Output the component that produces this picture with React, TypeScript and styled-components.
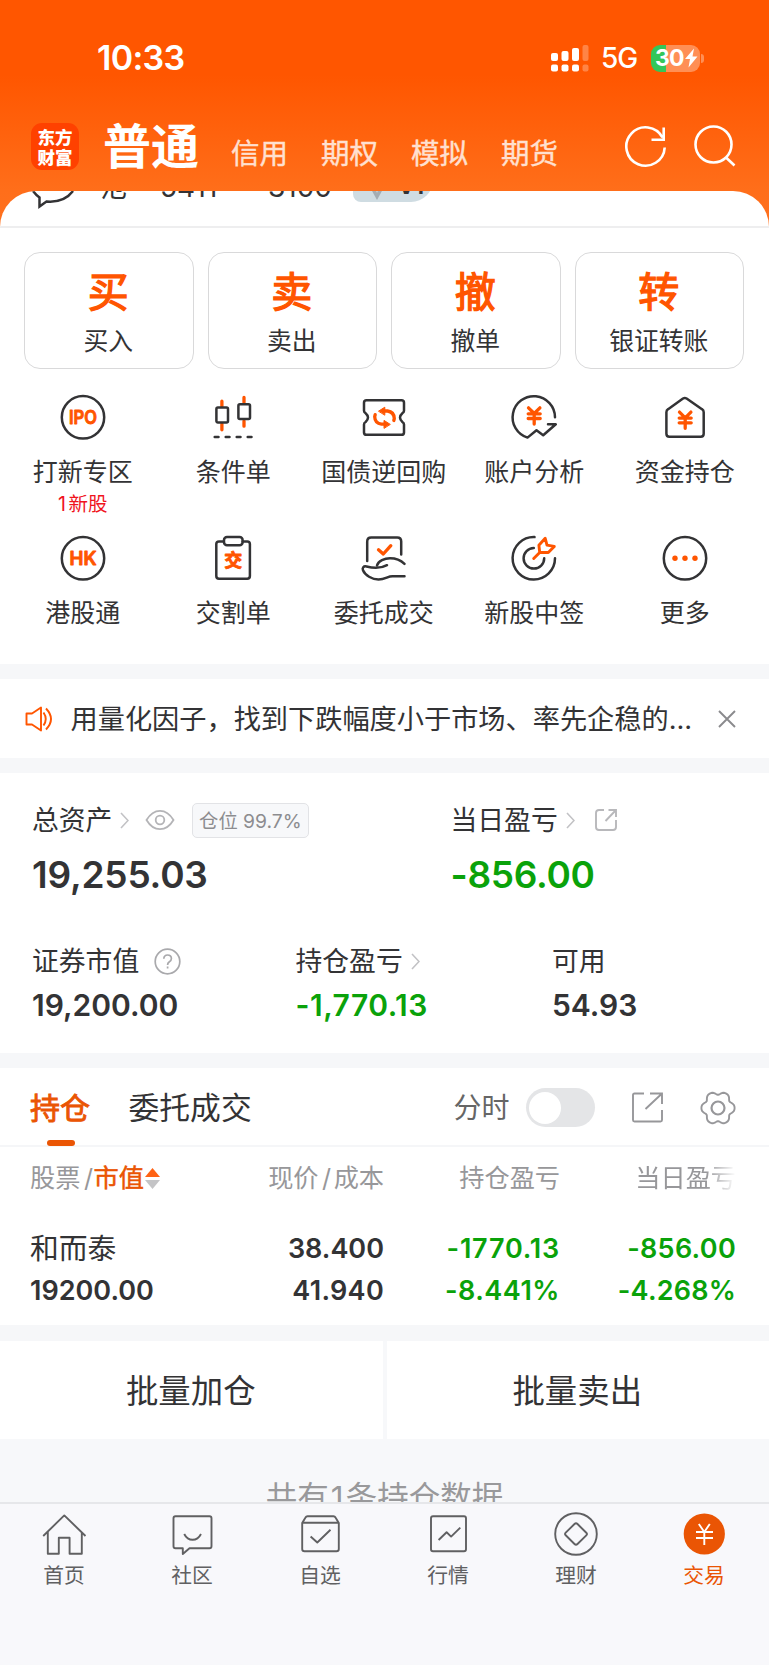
import React from "react";
import styled, { createGlobalStyle } from "styled-components";

const ORANGE = "#ff5500";
const TAB_ORANGE = "#ea5504";
const INK = "#333335";
const GREEN = "#0aa20a";

const Global = createGlobalStyle`
  * { box-sizing: border-box; }
  body {
    margin: 0;
    background: #f7f8fa;
    font-family: Inter, "Noto Sans CJK SC", sans-serif;
    color: ${INK};
    line-height: 1;
  }
  svg { display: block; flex: none; fill: none; }
`;

const Screen = styled.div`
  width: 769px;
  height: 1665px;
  display: flex;
  flex-direction: column;
  overflow: hidden;
  background: linear-gradient(#ff5600 0, #ff5600 75px, #ff6e1a 190px, #ff7220 240px, #f7f8fa 241px);
`;

/* ---------- status bar ---------- */
const StatusBar = styled.div`
  height: 115px;
  flex: none;
  display: flex;
  align-items: center;
  padding: 1px 65px 0 97px;
  color: #fff;
`;
const Clock = styled.div`
  font-size: 34px;
  font-weight: 600;
  letter-spacing: -0.7px;
  flex: 1;
`;
const Network = styled.div`
  font-size: 28px;
  font-weight: 500;
  width: 59px;
  padding-left: 12px;
  letter-spacing: -1px;
`;
const Battery = styled.div`
  width: 49px;
  height: 27px;
  margin-left: 3px;
  border-radius: 9px;
  background: linear-gradient(90deg, #34c759 15px, #ff8f55 15px);
  display: flex;
  align-items: center;
  padding-left: 4px;
  font-size: 23px;
  font-weight: 700;
  letter-spacing: -0.8px;
`;
const BatteryTip = styled.div`
  width: 3px;
  height: 9px;
  margin-left: 1px;
  border-radius: 0 4px 4px 0;
  background: #ff8f55;
`;

/* ---------- header ---------- */
const Header = styled.div`
  height: 76px;
  flex: none;
  display: flex;
  align-items: flex-start;
  padding: 0 33px 0 31px;
  color: #fff;
`;
const Logo = styled.div`
  width: 48px;
  height: 47px;
  margin-top: 8px;
  border-radius: 11px;
  background: #ff4100;
  display: grid;
  place-content: center;
  font: 900 17.5px/20px "Noto Sans CJK SC", sans-serif;
  text-align: center;
`;
const MainTab = styled.div`
  margin: 4px 0 0 24px;
  width: 103px;
  font-size: 48px;
  line-height: 56px;
  font-weight: 700;
  white-space: nowrap;
`;
const SubTab = styled.div`
  margin: 24px 0 0;
  width: 90px;
  padding-left: 25px;
  font-size: 28.5px;
  line-height: 30px;
  -webkit-text-stroke: 0.4px #ffe0d0;
  color: #ffe0d0;
  white-space: nowrap;
`;
const HeaderIcons = styled.div`
  flex: 1;
  display: flex;
  justify-content: flex-end;
  gap: 25px;
  margin-top: 8px;
`;

/* ---------- sheet ---------- */
const Sheet = styled.div`
  flex: none;
  height: 473px;
  background: #fff;
  border-radius: 36px 36px 0 0;
  overflow: hidden;
`;
const AccountRow = styled.div`
  height: 37px;
  border-bottom: 2px solid #eeeeef;
  display: flex;
  align-items: flex-start;
  padding-left: 32px;
  overflow: hidden;
  font-size: 28px;
`;
const AccountText = styled.span<{ $w: number }>`
  width: ${(p) => p.$w}px;
  margin-top: -18px;
  line-height: 28px;
  white-space: nowrap;
  flex: none;
`;
const LevelPill = styled.span`
  width: 80px;
  height: 30px;
  margin-top: -19px;
  border-radius: 8px 8px 22px 8px;
  background: #cfdce2;
  display: flex;
  align-items: flex-start;
  gap: 9px;
  padding: 3px 0 0 12px;
  font-size: 22px;
  font-weight: 700;
  line-height: 22px;
`;
const Gem = styled.svg`
  margin-top: 4px;
`;
const Cards = styled.div`
  display: grid;
  grid-template-columns: repeat(4, 169.5px);
  gap: 14px;
  padding: 24px 0 0 24px;
`;
const Card = styled.div`
  height: 117px;
  border: 1.5px solid #d9d9da;
  border-radius: 16px;
  display: flex;
  flex-direction: column;
  align-items: center;
  padding: 18px 1px 0 0;
`;
const CardGlyph = styled.div`
  font-size: 41px;
  line-height: 42px;
  -webkit-text-stroke: 1.3px ${ORANGE};
  color: ${ORANGE};
`;
const CardLabel = styled.div`
  margin-top: 15px;
  font-size: 24.8px;
  line-height: 26px;
`;
const Shortcuts = styled.div`
  display: grid;
  grid-template-columns: repeat(5, 150.5px);
  grid-auto-rows: 141px;
  padding: 24px 0 0 7.5px;
`;
const Shortcut = styled.div`
  display: flex;
  flex-direction: column;
  align-items: center;
`;
const ShortcutLabel = styled.div`
  margin-top: 18px;
  font-size: 25px;
  line-height: 26px;
  white-space: nowrap;
`;
const ShortcutNote = styled.div`
  margin-top: 9px;
  font-size: 19.5px;
  line-height: 20px;
  color: #f0141e;
  &::first-letter { letter-spacing: 2.5px; }
`;

/* ---------- notice ---------- */
const Gap = styled.div<{ $h: number }>`
  flex: none;
  height: ${(p) => p.$h}px;
  background: #f6f7f9;
`;
const Notice = styled.div`
  flex: none;
  height: 79px;
  background: #fff;
  display: flex;
  align-items: center;
  padding: 0 33px 0 25px;
`;
const NoticeText = styled.div`
  flex: 1;
  padding: 2px 0 0 16.5px;
  font-size: 27.2px;
  white-space: nowrap;
`;

/* ---------- assets ---------- */
const Assets = styled.div`
  flex: none;
  height: 280px;
  background: #fff;
  padding: 29px 0 0 32px;
`;
const AssetRow = styled.div<{ $cols: string; $top?: number }>`
  display: grid;
  grid-template-columns: ${(p) => p.$cols};
  margin-top: ${(p) => p.$top ?? 0}px;
`;
const AssetLabel = styled.div`
  height: 36px;
  display: flex;
  align-items: center;
  font-size: 26.8px;
  white-space: nowrap;
`;
const Inset = styled.span<{ $l: number }>`
  margin-left: ${(p) => p.$l}px;
`;
const Badge = styled.span`
  width: 117px;
  height: 35px;
  margin-left: 16.5px;
  padding-top: 3px;
  border: 1.5px solid #e2e3e6;
  border-radius: 5px;
  background: #f7f8fa;
  display: flex;
  align-items: center;
  justify-content: center;
  font-size: 19.3px;
  color: #8c8c8f;
`;
const Amount = styled.div<{ $size: number; $top: number; $green?: boolean; $ls?: number }>`
  margin-top: ${(p) => p.$top}px;
  font-size: ${(p) => p.$size}px;
  font-weight: 600;
  letter-spacing: ${(p) => p.$ls ?? 0}px;
  color: ${(p) => (p.$green ? GREEN : INK)};
`;

/* ---------- positions ---------- */
const Positions = styled.div`
  flex: none;
  height: 257px;
  background: #fff;
`;
const Tabs = styled.div`
  height: 79px;
  border-bottom: 2px solid #f5f6f8;
  display: flex;
  align-items: flex-start;
  padding-left: 30px;
`;
const Tab = styled.div<{ $active?: boolean }>`
  height: 78px;
  width: ${(p) => (p.$active ? 98.5 : 325)}px;
  font-size: ${(p) => (p.$active ? 30 : 30.8)}px;
  -webkit-text-stroke: ${(p) => (p.$active ? `0.9px ${TAB_ORANGE}` : "0")};
  color: ${(p) => (p.$active ? TAB_ORANGE : INK)};
  line-height: 32px;
  padding-top: 24px;
  display: flex;
  flex-direction: column;
  white-space: nowrap;
`;
const Underline = styled.div`
  width: 28px;
  height: 6px;
  border-radius: 3px;
  margin: 16px 0 0 17px;
  background: ${TAB_ORANGE};
`;
const Tools = styled.div`
  height: 79px;
  display: flex;
  align-items: center;
  font-size: 28px;
  color: #666;
`;
const Toggle = styled.div`
  width: 69px;
  height: 39px;
  margin-left: 16.5px;
  border-radius: 20px;
  background: #e4e5e7;
  padding: 3.5px 2.5px;
  &::before {
    content: "";
    display: block;
    width: 32px;
    height: 32px;
    border-radius: 50%;
    background: #fff;
  }
`;
const TableRow = styled.div<{ $h: number; $head?: boolean }>`
  height: ${(p) => p.$h}px;
  display: grid;
  grid-template-columns: 170px 184px 176px 176px;
  align-items: center;
  padding-left: 30px;
  font-size: ${(p) => (p.$head ? 25.2 : 27)}px;
  font-weight: ${(p) => (p.$head ? 400 : 600)};
  color: ${(p) => (p.$head ? "#97979a" : INK)};
  white-space: nowrap;
`;
const Cell = styled.div<{ $green?: boolean; $name?: boolean; $fade?: boolean; $ls?: number }>`
  text-align: right;
  color: ${(p) => (p.$green ? GREEN : "inherit")};
  letter-spacing: ${(p) => p.$ls ?? 0}px;
  ${(p) => p.$fade && "mask-image: linear-gradient(90deg, #000 calc(100% - 30px), transparent);"}
  &:first-child {
    display: flex;
    align-items: center;
    ${(p) => p.$name && "font-size: 28.8px; font-weight: 400; padding-top: 1px;"}
  }
`;
const Slash = styled.span`
  padding: 0 2.5px 0 3.5px;
`;
const SortKey = styled.span`
  color: ${TAB_ORANGE};
  -webkit-text-stroke: 0.5px ${TAB_ORANGE};
  margin: 0 1px 0 -2px;
`;

const BatchRow = styled.div`
  flex: none;
  display: grid;
  grid-template-columns: 1fr 1fr;
  gap: 4px;
  height: 98px;
  background: #f7f8fa;
`;
const BatchButton = styled.div`
  background: #fff;
  display: flex;
  align-items: center;
  justify-content: center;
  padding: 5px 1px 0 0;
  font-size: 32.4px;
`;
const Summary = styled.div`
  flex: none;
  height: 63px;
  overflow: hidden;
  background: #f7f8fa;
  text-align: center;
  padding-top: 42px;
  font-size: 31.5px;
  line-height: 34px;
  color: #99999b;
`;
const Count = styled.span`
  padding: 0 2px;
`;

/* ---------- bottom navigation ---------- */
const Nav = styled.div`
  flex: 1;
  border-top: 2px solid #e6e7ea;
  background: #f8f8fb;
  display: grid;
  grid-template-columns: repeat(6, 128px);
  padding-top: 6px;
`;
const NavItem = styled.div<{ $active?: boolean }>`
  display: flex;
  flex-direction: column;
  align-items: center;
  gap: 6.5px;
  font-size: 20.8px;
  line-height: 22px;
  color: ${(p) => (p.$active ? TAB_ORANGE : "#606062")};
`;

/* ---------- drawings ---------- */
const Dark = styled.g`
  stroke: ${INK};
  stroke-width: 2.5;
  stroke-linecap: round;
  stroke-linejoin: round;
`;
const Hot = styled.g<{ $w?: number }>`
  stroke: ${ORANGE};
  stroke-width: ${(p) => p.$w ?? 3.3};
  stroke-linecap: round;
  stroke-linejoin: round;
`;
const IconText = styled.text`
  fill: ${ORANGE};
  stroke: ${ORANGE};
  stroke-width: 0.9;
  stroke-linejoin: round;
  font-family: Inter, "Noto Sans CJK SC", sans-serif;
  font-weight: 600;
  text-anchor: middle;
`;

const Box48 = ({ children }: { children: React.ReactNode }) => (
  <svg width="48" height="48" viewBox="0 0 48 48">{children}</svg>
);

const Yen = ({ y = 0 }: { y?: number }) => (
  <Hot transform={`translate(0 ${y})`}>
    <path d="M18.5 14.8l5.7 5.7 5.7-5.7M24.2 20.5v10.500M18.200 20.800h12M18.200 25.500h12" />
  </Hot>
);

const Chevron = () => (
  <svg width="9" height="17" viewBox="0 0 9 17">
    <path d="M1 1l7 7.5L1 16" stroke="#c2c2c5" strokeWidth="1.6" />
  </svg>
);

/* six-lobed outline of the settings gear */
const gearPath =
  Array.from({ length: 72 }, (_, i) => {
    const a = (i * Math.PI) / 36;
    const r = 15.2 + 1.7 * Math.cos(6 * a) - 0.3 * Math.cos(12 * a);
    return `${i ? "L" : "M"}${(18 + r * Math.cos(a)).toFixed(2)} ${(18 + r * Math.sin(a)).toFixed(2)}`;
  }).join("") + "z";

const shortcuts = [
  {
    label: "打新专区",
    note: "1新股",
    icon: (
      <>
        <Dark><circle cx="24" cy="24.3" r="21.2" /></Dark>
        <IconText x="24" y="31" fontSize="18.5" textLength="28" lengthAdjust="spacingAndGlyphs">IPO</IconText>
      </>
    ),
  },
  {
    label: "条件单",
    icon: (
      <>
        <Hot><path d="M12.9 8.2v5M12.9 31v5.8M35 4.5v5M35 28v5.2" /></Hot>
        <Dark>
          <rect x="7.4" y="14.6" width="11.6" height="14.9" rx="1.5" />
          <rect x="29.4" y="11.2" width="11.6" height="14.9" rx="1.5" />
          <path d="M5.7 44h3.800M16.700 44h3.800M27.700 44h3.800M38.700 44h3.800" />
        </Dark>
      </>
    ),
  },
  {
    label: "国债逆回购",
    icon: (
      <>
        <Dark>
          <path d="M6.500 7.300h35q2.500 0 2.500 2.500v8q0 1.500-1.600 2.400-2.400 2-2.400 4.400t2.400 4.400q1.600 1 1.600 2.400v8q0 2.400-2.500 2.400h-35Q4 41.800 4 39.400v-8q0-1.500 1.600-2.400 2.400-2 2.400-4.400t-2.400-4.400Q4 19.200 4 17.800v-8q0-2.500 2.500-2.500z" />
        </Dark>
        <Hot>
          <path d="M24 18h3.500q6.600 1 6.800 7.500l-.5 2M25 31.200h-3.500q-6.600-1-6.800-7.500l.5-2" />
        </Hot>
        <Hot $w={1}>
          <path fill={ORANGE} d="M18.800 18l6-3.800v7.600zM30 31.200l-6-3.800v7.600z" />
        </Hot>
      </>
    ),
  },
  {
    label: "账户分析",
    icon: (
      <>
        <Dark>
          <path d="M45 24.300A21.200 21.200 0 1 0 17.500 44.600L26.500 37.200 33.200 42.200 45.800 31.300H38" />
        </Dark>
        <Yen />
      </>
    ),
  },
  {
    label: "资金持仓",
    icon: (
      <>
        <Dark>
          <path d="M22 5.500q1.800-1 3.600 0L41 16.200q1.700 1 1.700 3v21.600q0 3-3 3H8.400q-3 0-3-3V19.200q0-2 1.700-3z" />
        </Dark>
        <Yen y={4.3} />
      </>
    ),
  },
  {
    label: "港股通",
    icon: (
      <>
        <Dark><circle cx="24" cy="24.3" r="21.2" /></Dark>
        <IconText x="24" y="31" fontSize="18.5" textLength="27" lengthAdjust="spacingAndGlyphs">HK</IconText>
      </>
    ),
  },
  {
    label: "交割单",
    icon: (
      <>
        <Dark>
          <path d="M14.800 7.400H10q-2.700 0-2.700 2.700v32q0 2.700 2.700 2.700h28.200q2.700 0 2.700-2.700v-32q0-2.700-2.700-2.700h-4.600" />
          <rect x="15" y="3.100" width="18.600" height="8.200" rx="3" />
        </Dark>
        <IconText x="24.2" y="33.3" fontSize="18">交</IconText>
      </>
    ),
  },
  {
    label: "委托成交",
    icon: (
      <>
        <Dark>
          <path d="M7.200 27V7.600q0-4 4-4h26q4 0 4 4V20.500" />
          <path d="M17 31.500C18 26.500 25 24.300 30 24.300c6 0 10.500 1.700 14.500 5.500" />
          <path d="M27 31.200C20 35 12 34 6.500 32.500c-3-.7-4.500 1.300-3.500 3.800 2 5 9 9.200 15.500 9.200 7 0 9-3.200 14-3.200h12" />
        </Dark>
        <Hot><path d="M18.500 15.800l4.800 4.200 7.500-8.300" /></Hot>
      </>
    ),
  },
  {
    label: "新股中签",
    icon: (
      <>
        <Dark>
          <path d="M24.500 3.100A21.200 21.200 0 1 0 45 24.300" />
          <path d="M23.800 14A10.300 10.300 0 1 0 34.200 24.300" />
        </Dark>
        <Hot $w={2.9}>
          <path d="M23.700 24.500l6-6M29.700 18.500l-.8-7.300 6.300-6.900 1.800 6.800 7.300 1.300-6 6.100z" />
        </Hot>
      </>
    ),
  },
  {
    label: "更多",
    icon: (
      <>
        <Dark><circle cx="24" cy="24.3" r="21.2" /></Dark>
        <g fill={ORANGE}>
          <circle cx="14" cy="24.3" r="2.7" />
          <circle cx="24" cy="24.3" r="2.7" />
          <circle cx="34" cy="24.3" r="2.7" />
        </g>
      </>
    ),
  },
];

const navItems = [
  {
    label: "首页",
    icon: <path d="M3.200 26L24.300 5.400 45.500 26M7.800 22v21.700h11V27.800h10.800v15.900H41.800V22" />,
  },
  {
    label: "社区",
    icon: (
      <path d="M21.500 38.300h20q2 0 2-2v-28q0-2-2-2h-34q-2 0-2 2v28q0 2 2 2h7.300v5.700zM16.200 24q3 5.800 8.400 5.800t8.400-5.800" />
    ),
  },
  {
    label: "自选",
    icon: (
      <path d="M6.200 13v26q0 2.300 2.300 2.300h32q2.300 0 2.300-2.300V13L39.500 7.500Q38.800 6.200 37.500 6.200h-26Q10.200 6.200 9.500 7.500zM6.200 12.700h36.600M14.600 26.500l6.700 6L34.500 19.800" />
    ),
  },
  {
    label: "行情",
    icon: (
      <>
        <rect x="7" y="6.2" width="35" height="35" rx="2" />
        <path d="M14.600 30l8-7.700 4.500 4.300 9.200-9" />
      </>
    ),
  },
  {
    label: "理财",
    icon: (
      <>
        <circle cx="24" cy="24" r="20.8" />
        <path d="M22.500 14q1.500-1.500 3 0l8.800 8.700q1.300 1.300 0 2.600L25.500 34q-1.500 1.500-3 0l-8.800-8.700q-1.300-1.300 0-2.600z" />
      </>
    ),
  },
  {
    label: "交易",
    active: true,
    icon: (
      <>
        <circle cx="24.3" cy="24" r="20.6" fill={TAB_ORANGE} stroke="none" />
        <path stroke="#fff" d="M18.800 14l5.500 8 5.500-8M24.300 22v13M16 22h17M16 28h17" />
      </>
    ),
  },
];

export default function App() {
  return (
    <Screen>
      <Global />
      <StatusBar>
        <Clock>10:33</Clock>
        <svg width="38" height="27" viewBox="0 0 38 27">
          <g fill="#fff">
            <rect x="0" y="8" width="7" height="8" rx="2" />
            <rect x="10.5" y="6" width="7" height="10" rx="2" />
            <rect x="21" y="3" width="7" height="13" rx="2" />
            <rect x="0" y="19.5" width="7" height="7" rx="2" />
            <rect x="10.5" y="19.5" width="7" height="7" rx="2" />
            <rect x="21" y="19.5" width="7" height="7" rx="2" />
          </g>
          <g fill="#ff8446">
            <rect x="31.5" y="0" width="6" height="16" rx="2" />
            <rect x="31.5" y="19.5" width="6" height="7" rx="2" />
          </g>
        </svg>
        <Network>5G</Network>
        <Battery>
          30
          <svg width="14" height="20" viewBox="0 0 14 20">
            <path d="M10 0.500L1 11h5L4.500 19.500 13.500 8.500H8.500z" fill="#fff" />
          </svg>
        </Battery>
        <BatteryTip />
      </StatusBar>

      <Header>
        <Logo>东方<br />财富</Logo>
        <MainTab>普通</MainTab>
        <SubTab>信用</SubTab>
        <SubTab>期权</SubTab>
        <SubTab>模拟</SubTab>
        <SubTab>期货</SubTab>
        <HeaderIcons>
          <svg width="44" height="46" viewBox="0 0 44 46" stroke="#fff" strokeWidth="2.6">
            <path d="M40.700 24.500A19.200 19.200 0 1 1 38.500 14.500M39.700 4.500v12.300H27.500" />
          </svg>
          <svg width="43" height="46" viewBox="0 0 43 46" stroke="#fff" strokeWidth="2.6">
            <circle cx="20.5" cy="21.5" r="18" />
            <path d="M33 34.500l8.500 8" />
          </svg>
        </HeaderIcons>
      </Header>

      <Sheet>
        <AccountRow>
          <svg width="68" height="20" viewBox="0 0 68 20">
            <path d="M1 0Q4 4 7.500 6.500V15.500L14.500 10.500Q32 12 41 0" stroke={INK} strokeWidth="2.5" />
          </svg>
          <AccountText $w={60}>沧</AccountText>
          <AccountText $w={108}>5411</AccountText>
          <AccountText $w={85}>3100</AccountText>
          <LevelPill>
            <Gem width="24" height="22" viewBox="0 0 24 22">
              <path d="M1 1l11 20L23 1z" fill="#a4adb3" />
              <path d="M8 1l4 13 4-13z" fill="#dbe3e7" />
            </Gem>
            V1
          </LevelPill>
        </AccountRow>
        <Cards>
          {[["买", "买入"], ["卖", "卖出"], ["撤", "撤单"], ["转", "银证转账"]].map(([g, l]) => (
            <Card key={l}>
              <CardGlyph>{g}</CardGlyph>
              <CardLabel>{l}</CardLabel>
            </Card>
          ))}
        </Cards>
        <Shortcuts>
          {shortcuts.map((s) => (
            <Shortcut key={s.label}>
              <Box48>{s.icon}</Box48>
              <ShortcutLabel>{s.label}</ShortcutLabel>
              {s.note && <ShortcutNote>{s.note}</ShortcutNote>}
            </Shortcut>
          ))}
        </Shortcuts>
      </Sheet>

      <Gap $h={15} />
      <Notice>
        <svg width="29" height="26" viewBox="0 0 29 26" stroke={ORANGE} strokeWidth="1.9">
          <path d="M1.500 7.500H7L16 1.500v23L7 18.500H1.500zM18.500 6.500q4.500 6.500 0 13M21 2.500q10 10.500 0 21" strokeLinejoin="round" />
        </svg>
        <NoticeText>用量化因子，找到下跌幅度小于市场、率先企稳的...</NoticeText>
        <svg width="18" height="18" viewBox="0 0 18 18" stroke="#8a8a8d" strokeWidth="1.9">
          <path d="M1 1l16 16M17 1L1 17" />
        </svg>
      </Notice>
      <Gap $h={15} />

      <Assets>
        <AssetRow $cols="418.5px 1fr">
          <div>
            <AssetLabel>
              总资产
              <Inset $l={8}><Chevron /></Inset>
              <Inset $l={16}>
                <svg width="30" height="22" viewBox="0 0 30 22" stroke="#b4b4b7" strokeWidth="1.8">
                  <path d="M1.500 11Q7 1.800 15 1.800T28.500 11Q23 20.200 15 20.200T1.500 11z" />
                  <circle cx="15" cy="11" r="4.3" />
                </svg>
              </Inset>
              <Badge>仓位 99.7%</Badge>
            </AssetLabel>
            <Amount $size={37} $top={18} $ls={-0.2}>19,255.03</Amount>
          </div>
          <div>
            <AssetLabel>
              当日盈亏
              <Inset $l={8}><Chevron /></Inset>
              <Inset $l={19}>
                <svg width="24" height="24" viewBox="0 0 24 24" stroke="#b8b8bb" strokeWidth="1.9">
                  <path d="M10 2H5Q2 2 2 5v14q0 3 3 3h14q3 0 3-3v-7M14.500 2H22v7M22 2L11.500 13" />
                </svg>
              </Inset>
            </AssetLabel>
            <Amount $size={37} $top={18} $green $ls={-0.3}>-856.00</Amount>
          </div>
        </AssetRow>
        <AssetRow $cols="263.5px 256.5px 1fr" $top={50}>
          <div>
            <AssetLabel>
              证券市值
              <Inset $l={15}>
                <svg width="27" height="27" viewBox="0 0 27 27">
                  <circle cx="13.5" cy="13.5" r="12.3" stroke="#a9a9ac" strokeWidth="1.7" />
                  <path d="M9.800 10.800q.2-3.800 3.800-3.800t3.800 3.400q0 2-2 3.300t-1.800 3.300M13.600 18.600v2" stroke="#a9a9ac" strokeWidth="1.7" />
                </svg>
              </Inset>
            </AssetLabel>
            <Amount $size={30} $top={11}>19,200.00</Amount>
          </div>
          <div>
            <AssetLabel>持仓盈亏<Inset $l={8}><Chevron /></Inset></AssetLabel>
            <Amount $size={30} $top={11} $green $ls={0.5}>-1,770.13</Amount>
          </div>
          <div>
            <AssetLabel>可用</AssetLabel>
            <Amount $size={30} $top={11}>54.93</Amount>
          </div>
        </AssetRow>
      </Assets>
      <Gap $h={15} />

      <Positions>
        <Tabs>
          <Tab $active>持仓<Underline /></Tab>
          <Tab>委托成交</Tab>
          <Tools>
            分时
            <Toggle />
            <Inset $l={37}>
              <svg width="31" height="31" viewBox="0 0 31 31" stroke="#97979a" strokeWidth="1.9">
                <path d="M12 1.500H2.500Q1 1.500 1 3v25q0 1.500 1.500 1.500h26q1.500 0 1.500-1.500V18M18 1.500h12V12M30 1.500L13.500 17" />
              </svg>
            </Inset>
            <Inset $l={37}>
              <svg width="36" height="36" viewBox="0 0 36 36" stroke="#97979a" strokeWidth="1.9" strokeLinejoin="round">
                <path d={gearPath} />
                <circle cx="18" cy="18" r="6.5" strokeWidth="2.2" />
              </svg>
            </Inset>
          </Tools>
        </Tabs>
        <TableRow $h={63} $head>
          <Cell>
            股票<Slash>/</Slash><SortKey>市值</SortKey>
            <svg width="15" height="21" viewBox="0 0 15 21">
              <path d="M7.500 0L15 9H0z" fill="#ff6315" />
              <path d="M7.500 21L15 12H0z" fill="#c4c4c6" />
            </svg>
          </Cell>
          <Cell>现价<Slash>/</Slash>成本</Cell>
          <Cell>持仓盈亏</Cell>
          <Cell $fade>当日盈亏</Cell>
        </TableRow>
        <TableRow $h={17} />
        <TableRow $h={43}>
          <Cell $name>和而泰</Cell>
          <Cell>38.400</Cell>
          <Cell $green $ls={0.8}>-1770.13</Cell>
          <Cell $green $ls={0.3}>-856.00</Cell>
        </TableRow>
        <TableRow $h={41}>
          <Cell>19200.00</Cell>
          <Cell $ls={0.3}>41.940</Cell>
          <Cell $green $ls={0.5}>-8.441%</Cell>
          <Cell $green $ls={0.2}>-4.268%</Cell>
        </TableRow>
      </Positions>
      <Gap $h={16} />
      <BatchRow>
        <BatchButton>批量加仓</BatchButton>
        <BatchButton>批量卖出</BatchButton>
      </BatchRow>
      <Summary>共有<Count>1</Count>条持仓数据</Summary>

      <Nav>
        {navItems.map((n) => (
          <NavItem key={n.label} $active={n.active}>
            <svg width="48" height="48" viewBox="0 0 48 48" stroke="#606062" strokeWidth="1.9" strokeLinejoin="round">
              {n.icon}
            </svg>
            {n.label}
          </NavItem>
        ))}
      </Nav>
    </Screen>
  );
}
